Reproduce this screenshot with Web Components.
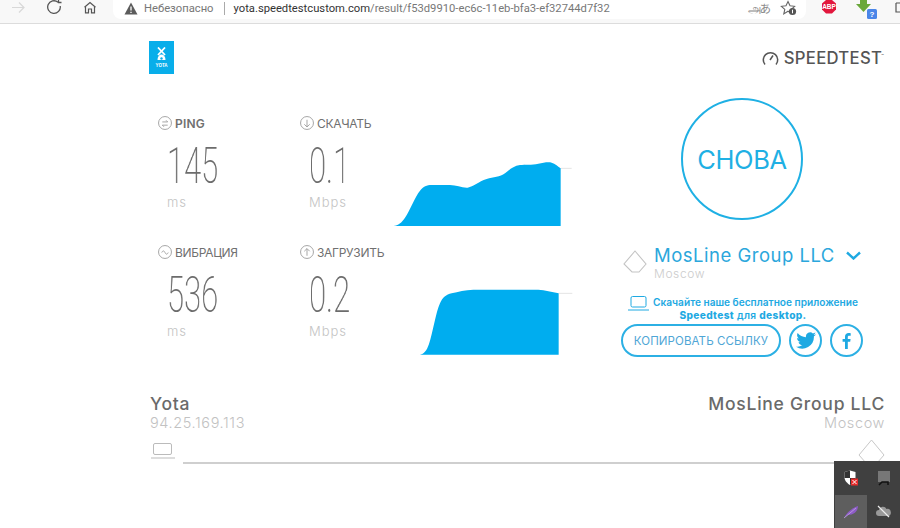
<!DOCTYPE html>
<html lang="ru"><head><meta charset="utf-8"><title>Speedtest</title>
<style>
html,body{margin:0;padding:0;background:#fff}
body{width:900px;height:528px;overflow:hidden;position:relative;font-family:"Inter","Liberation Sans",sans-serif}
</style></head><body>
<browser-bar></browser-bar>
<st-page>
  <st-header slot="header"></st-header>
  <st-metric slot="m1" icon="ping" label="PING" value="145" unit="ms" strong></st-metric>
  <st-metric slot="m2" icon="down" label="СКАЧАТЬ" value="0.1" unit="Mbps"></st-metric>
  <st-chart slot="c1" kind="down"></st-chart>
  <st-metric slot="m3" icon="jitter" label="ВИБРАЦИЯ" value="536" unit="ms"></st-metric>
  <st-metric slot="m4" icon="up" label="ЗАГРУЗИТЬ" value="0.2" unit="Mbps"></st-metric>
  <st-chart slot="c2" kind="up"></st-chart>
  <st-panel slot="panel"></st-panel>
  <st-hosts slot="hosts"></st-hosts>
</st-page>
<tray-popup></tray-popup>
<script>
function def(name,html){
  customElements.define(name,class extends HTMLElement{
    constructor(){super();this.attachShadow({mode:'open'}).innerHTML=typeof html==='function'?html(this):html;}
  });
}
const blue='#1cade4';
def('browser-bar',`<style>
:host{display:flex;height:23px;background:#f8f8f8;border-bottom:1px solid #dcdcdc;color:#666;font:11.23px "Roboto","Liberation Sans",sans-serif;overflow:hidden}
.nav{width:113px;display:flex;flex:none}
.nav svg{flex:none}
.url{flex:none;background:#fff;border-radius:0 0 8px 8px;display:flex;align-items:center;height:17px;padding:0 0 2px 11px;width:682px}
.warn{margin-right:6px;flex:none}
.ns{color:#777}
.sep{width:1px;height:13px;background:#aaa;margin:0 9px 0 10px;flex:none}
.host{color:#333}.path{color:#777}
.tr{margin-left:auto;display:flex;align-items:center;gap:10px;padding-right:8px}
.kana{font:11.5px "Noto Sans CJK JP",sans-serif;color:#888;letter-spacing:-1px}
.ext{flex:1;display:flex;align-items:flex-start}
</style>
<div class="nav">
<svg width="113" height="23" viewBox="0 0 113 23" fill="none">
<path d="M12 7.500H24M19 2.500l5 5-5 5" stroke="#d8d8d8" stroke-width="1.200"/>
<path d="M60.200 6a6.300 6.300 0 1 1-2.200-3.800M58.500 -.5v3h3" stroke="#555" stroke-width="1.300"/>
<path d="M84.500 7.300L90 2.500l5.500 4.800M85.500 7v5.800h3V9h3v3.800h3V7" stroke="#555" stroke-width="1.200"/>
</svg></div>
<div class="url">
<svg class="warn" width="14" height="13" viewBox="0 0 14 13"><path d="M7 .5L13.500 12.500H.5z" fill="#5c5c5c"/><path d="M7 4.500v4M7 9.700v1.300" stroke="#fff" stroke-width="1.300"/></svg>
<span class="ns">Небезопасно</span><span class="sep"></span><span class="host">yota.speedtestcustom.com</span><span class="path">/result/f53d9910-ec6c-11eb-bfa3-ef32744d7f32</span>
<span class="tr"><span class="kana">அあ</span>
<svg width="18" height="17" viewBox="0 0 18 17" fill="none"><path d="M8 1.500l2 4.300 4.600.5-3.400 3.100 1 4.500L8 11.200l-4.200 2.700 1-4.500L1.400 6.300 6 5.800z" stroke="#666" stroke-width="1.100"/><circle cx="12.500" cy="11.500" r="3.600" fill="#555"/><path d="M12.500 9.700v3.600" stroke="#fff"/></svg></span>
</div>
<div class="ext">
<svg width="94" height="23" viewBox="0 0 94 23"><path d="M20 0h6l4 3.500v6L26 13.500h-6l-4-4v-6z" fill="#e2173d"/><text x="23" y="9" font-family="Liberation Sans" font-size="6.500" font-weight="700" fill="#fff" text-anchor="middle">ABP</text>
<path d="M54 0h7v4h4l-7.500 8L50 4h4z" fill="#6aa83a"/><rect x="61" y="9" width="10" height="10" rx="1.500" fill="#4a86e8"/><text x="66" y="17" font-family="Liberation Sans" font-size="8" font-weight="700" fill="#fff" text-anchor="middle">?</text>
<path d="M90 3h4M90 3v9h4" stroke="#555" fill="none" stroke-width="1.200"/></svg>
</div>`);

def('st-page',`<style>
:host{display:block;padding:17px 16px 0 150px;width:900px;box-sizing:border-box}
.res{display:flex;margin-top:24px}
.left{width:470px;flex:none;display:grid;grid-template-columns:142px 95px 1fr;grid-template-rows:129px 129px}
.right{width:265px;flex:none}
.hosts{margin-top:37px}
</style>
<slot name="header"></slot>
<div class="res"><div class="left"><slot name="m1"></slot><slot name="m2"></slot><slot name="c1"></slot><slot name="m3"></slot><slot name="m4"></slot><slot name="c2"></slot></div>
<div class="right"><slot name="panel"></slot></div></div>
<div class="hosts"><slot name="hosts"></slot></div>`);

def('st-header',`<style>
:host{display:flex;justify-content:space-between;align-items:flex-start;height:33px}
.logo{width:25px;height:33px;margin-left:-1px;background:#08aeea;display:flex;flex-direction:column;align-items:center;color:#fff;font:700 4.500px "Liberation Sans",sans-serif;padding-top:6px;box-sizing:border-box}
.logo svg{display:block;margin-bottom:2px}
.brand{display:flex;align-items:center;gap:5px;color:#555;font:500 16.700px "Inter","Liberation Sans",sans-serif;letter-spacing:.3px;margin-top:7px}
.brand sup{font-size:4px;position:relative;top:-3px;margin-left:-6px}
</style>
<div class="logo"><svg width="11" height="14" viewBox="0 0 11 14"><path d="M2 .5L9 8M9 .5L2 8" stroke="#fff" stroke-width="1.800" fill="none"/><path d="M1.500 13c0-3.500 1.800-5.500 4-5.500s4 2 4 5.500z" fill="#fff"/><circle cx="5.500" cy="11.500" r="1.200" fill="#08aeea"/></svg><span>YOTA</span></div>
<div class="brand"><svg width="17" height="17" viewBox="0 0 17 17" fill="none" stroke="#555" stroke-width="1.500"><path d="M3 14.500a7.200 7.200 0 1 1 11 0"/><path d="M8 10l3-4.500"/></svg><span>SPEEDTEST</span><sup>™</sup></div>`);

const mIcons={
 ping:'<path d="M4 5.500h5l-1.500-1.500M9 8.500H4l1.500 1.500"/>',
 down:'<path d="M6.500 3.500v6.500M4 7.700l2.500 2.500L9 7.700"/>',
 up:'<path d="M6.500 10V3.500M4 5.800l2.500-2.500L9 5.800"/>',
 jitter:'<path d="M3.500 7c1-2 2-2 3 0s2 2 3 0"/>'
};
def('st-metric',(el)=>`<style>
:host{display:block;color:#777;padding-top:18px}
.l{display:flex;align-items:center;gap:3px;height:14px;margin-left:8px;font:400 12px "Inter","Liberation Sans",sans-serif;color:#707070;letter-spacing:-.3px;white-space:nowrap}
.l.s{font-weight:600;letter-spacing:.2px}
.v{margin:18px 0 0 16.500px;height:36px;font:200 50px/36px "Roboto","Liberation Sans",sans-serif;color:#6c6c6c;transform:scaleX(.62);transform-origin:left;white-space:nowrap;will-change:transform}
.u{margin:10px 0 0 17px;font:300 13px "Inter","Liberation Sans",sans-serif;color:#c4c4c4;letter-spacing:1px}
</style><div class="l ${el.hasAttribute('strong')?'s':''}"><svg width="14" height="14" viewBox="0 0 13 13" fill="none" stroke="#999" stroke-width=".8"><circle cx="6.500" cy="6.500" r="6"/>${mIcons[el.getAttribute('icon')]}</svg><span>${el.getAttribute('label')}</span></div>
<div class="v">${el.getAttribute('value')}</div><div class="u">${el.getAttribute('unit')}</div>`);

def('st-chart',(el)=>el.getAttribute('kind')==='down'?`<style>:host{display:block;margin-left:-2px;padding-top:52px}svg{display:block}</style>
<svg width="200" height="85" viewBox="0 0 600 255"><path d="M527 55H560" stroke="#e4e4e4" stroke-width="3" fill="none"/>
<path d="M25 228C40 226 50 218 60 203C75 180 90 140 105 122C115 110 125 105 140 105L195 105C215 105 230 114 248 113C265 110 280 95 305 87C325 81 345 82 360 70C375 58 385 48 405 45C420 43 440 46 460 41C475 38 490 35 500 38C510 41 520 50 527 55L527 228Z" fill="#00adef"/></svg>`
:`<style>:host{display:block;margin-left:23px;padding-top:53px}svg{display:block}</style>
<svg width="170" height="80" viewBox="0 0 510 240"><path d="M446 40H487" stroke="#e4e4e4" stroke-width="3" fill="none"/>
<path d="M30 224C42 222 50 212 57 192C68 160 78 95 90 70C98 52 108 44 125 40C145 35 165 30 190 29L385 29C405 30 425 36 446 40L446 224Z" fill="#00adef"/></svg>`);

def('st-panel',`<style>
:host{display:block;font-family:"Inter","Liberation Sans",sans-serif;color:${blue}}
.go{width:122px;height:122px;box-sizing:border-box;border:2.500px solid #1fb0e4;border-radius:50%;margin:0 0 0 61px;display:flex;align-items:center;justify-content:center;font:400 25.500px "Inter","Liberation Sans",sans-serif;color:#1fb0e4;letter-spacing:-.4px}
.srv{display:flex;margin-top:24px;height:42px}
.srv svg.tri{margin:6px 0 0 3px;flex:none}
.txt{margin-left:7px}
.name{font:400 18.500px/22px "Inter","Liberation Sans",sans-serif;letter-spacing:.5px;color:#2ba7dc;white-space:nowrap}
.city{font:300 12px/15px "Inter","Liberation Sans",sans-serif;color:#ccc;letter-spacing:.6px}
.chev{margin:7px 0 0 11px;flex:none}
.promo{margin-top:10px;text-align:center;font:600 10.150px/12.500px "Inter","Liberation Sans",sans-serif;color:#1ea9e2;width:246px;white-space:nowrap}
.promo svg{vertical-align:-2px;margin:-4px 4px -3px 0}
.promo b{font-weight:800}
.sec{letter-spacing:.35px}
.row{display:flex;gap:8px;margin-top:3px;margin-left:1px}
.copy{width:160px;height:33px;box-sizing:border-box;border:2px solid #2cb0e4;border-radius:17px;display:flex;align-items:center;justify-content:center;font:400 11.500px "Inter","Liberation Sans",sans-serif;color:#4fa6d6;letter-spacing:.1px}
.c{width:33px;height:33px;box-sizing:border-box;border:2px solid #2cb0e4;border-radius:50%;display:flex;align-items:center;justify-content:center}
</style>
<div class="go">СНОВА</div>
<div class="srv"><svg class="tri" width="24" height="23" viewBox="0 0 24 23" fill="none" stroke="#c4c4c4" stroke-width="1.100"><path d="M12 1L23 14 16 22H9L1 14z"/></svg>
<div class="txt"><div class="name">MosLine Group LLC</div><div class="city">Moscow</div></div>
<svg class="chev" width="15" height="9" viewBox="0 0 15 9" fill="none" stroke="#1ea9e2" stroke-width="2.400"><path d="M1 1.500l6.500 6 6.500-6"/></svg></div>
<div class="promo"><svg width="21" height="15" viewBox="0 0 21 15" fill="none" stroke="#1ea9e2" stroke-width="1"><rect x="3" y=".5" width="15" height="10.500" rx="1.500"/><path d="M0 14h21"/></svg>Скачайте наше бесплатное приложение<br><span class="sec"><b>Speedtest</b> для <b>desktop.</b></span></div>
<div class="row"><div class="copy">КОПИРОВАТЬ ССЫЛКУ</div>
<div class="c"><svg width="20" height="17" viewBox="0 0 24 20" fill="#1ea9e2"><path d="M24 2.400c-.9.400-1.800.7-2.800.8 1-.6 1.800-1.600 2.200-2.700-1 .6-2 1-3.100 1.200A4.900 4.900 0 0 0 12 6.100C8 5.900 4.400 4 2 1c-1.300 2.200-.7 5.100 1.500 6.600-.8 0-1.600-.2-2.200-.6 0 2.300 1.600 4.400 3.900 4.900-.7.200-1.500.2-2.200.1.600 2 2.400 3.400 4.600 3.400A9.900 9.900 0 0 1 0 17.400 14 14 0 0 0 21.500 5c1-.7 1.800-1.600 2.500-2.600z"/></svg></div>
<div class="c"><svg width="9" height="16" viewBox="0 0 9 16" fill="#1ea9e2"><path d="M5.800 16V8.700h2.400l.4-2.800H5.800V4.100c0-.8.200-1.400 1.400-1.400h1.500V.2C8.400.1 7.600 0 6.600 0 4.500 0 3 1.300 3 3.700v2.200H.6v2.800H3V16z"/></svg></div></div>`);

def('st-hosts',`<style>
:host{display:block;font-family:"Inter","Liberation Sans",sans-serif;width:735px}
.top{display:flex;justify-content:space-between}
.n{font:500 17.500px/20px "Inter","Liberation Sans",sans-serif;color:#6a6a6a;letter-spacing:.75px}
.s{font:300 14.500px/18px "Inter","Liberation Sans",sans-serif;color:#c2c2c2;letter-spacing:.6px}
.r{text-align:right}
.line{display:flex;align-items:flex-end;height:26px;margin-top:7px}
.bar{flex:1;height:2px;background:#cfcfcf;margin:0 -2px 1px 8px}
.lap{margin-bottom:6px;flex:none}
.tri{flex:none}
</style>
<div class="top"><div><div class="n">Yota</div><div class="s">94.25.169.113</div></div>
<div class="r"><div class="n">MosLine Group LLC</div><div class="s">Moscow</div></div></div>
<div class="line"><svg class="lap" width="25" height="16" viewBox="0 0 25 16" fill="none" stroke="#bbb" stroke-width="1"><rect x="3.500" y=".5" width="18" height="11" rx="1.500"/><path d="M1 15h24"/></svg>
<div class="bar"></div>
<svg class="tri" width="27" height="26" viewBox="0 0 27 26" fill="none" stroke="#c8c8c8" stroke-width="1"><path d="M13.500 1L26 16 19 24H8L1 16z"/></svg></div>`);

def('tray-popup',`<style>
:host{position:absolute;left:834px;top:461px;width:66px;height:67px;background:#404040;display:grid;grid-template-columns:33px 33px;grid-template-rows:33px 34px}
div{display:flex;align-items:center;justify-content:center}
.a{background:#5e5e5e;margin:1px 0 0 1px}
</style>
<div><svg width="15" height="16" viewBox="0 0 15 16"><path d="M1.500 2L7 .5 12.500 2v5c0 4-3 6.500-5.500 8C4.500 13.500 1.500 11 1.500 7z" fill="#fff"/><path d="M7 .5V8H1.500V2zM7 8h5.500c0 3-3 5.500-5.500 7z" fill="#333"/><rect x="8" y="8.500" width="7" height="7" fill="#e52b2b"/><path d="M9.500 10l4 4M13.500 10l-4 4" stroke="#fff"/></svg></div>
<div><svg width="14" height="16" viewBox="0 0 14 16"><rect x="1" y="1" width="12" height="11" fill="#777"/><path d="M2 15l3-3h6v3" fill="none" stroke="#111" stroke-width="1.500"/></svg></div>
<div class="a"><svg width="16" height="14" viewBox="0 0 16 14"><path d="M1 13C4 7 9 3 15 1c0 5-4 9-10 9z" fill="#8d5bc7"/><path d="M1 13L13 3" stroke="#c9b2e6" stroke-width=".7"/></svg></div>
<div><svg width="15" height="13" viewBox="0 0 15 13"><path d="M3 11a3 3 0 0 1 0-6 4 4 0 0 1 7.500-1A3.500 3.500 0 0 1 12 11z" fill="#9a9a9a"/><path d="M2 1l11 11" stroke="#eee" stroke-width="1.200"/></svg></div>`);
</script>
</body></html>
